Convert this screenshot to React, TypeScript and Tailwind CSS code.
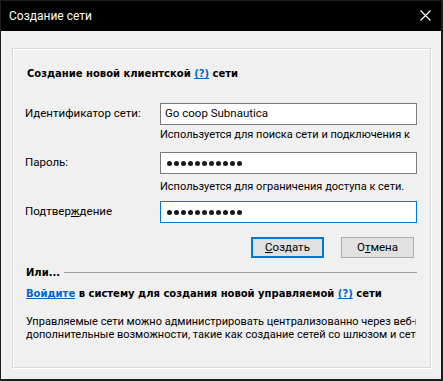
import React from "react";

const Dots = () => (
  <div className="flex items-center gap-[2px]">
    {Array.from({ length: 11 }).map((_, i) => (
      <div key={i} className="w-[5px] h-[5px] rounded-full bg-[#1a1a1a]" />
    ))}
  </div>
);

export default function App() {
  return (
    <div className="w-[443px] h-[381px] bg-[#1c1c1c] pl-[1px] pt-[1px] pr-[2px] pb-[2px] font-['Roboto',sans-serif] text-[11px] text-black">
      <div className="h-[30px] bg-black flex items-center justify-between pl-[8px] pr-[10px] text-white text-[12px]">
        <span className="leading-[16px]">Создание сети</span>
        <svg width="11" height="11" viewBox="0 0 11 11" className="mt-[-1px]">
          <path d="M0.5 0.5 L10.5 10.5 M10.5 0.5 L0.5 10.5" stroke="#ffffff" strokeWidth="1.1" />
        </svg>
      </div>
      <div className="h-[348px] bg-[#f0f0f0] pt-[17px] pl-[11px]">
        <div className="w-[419px] h-[320px] border border-[#d9d9d9] shadow-[inset_1px_1px_0_#ffffff,1px_1px_0_#ffffff] pl-[12px] overflow-hidden">
          <div className="w-[392px]">
            <div className="mt-[18px] h-[14px] leading-[14px] font-['DejaVu_Sans',sans-serif] font-bold text-[10px] pl-[2px] whitespace-nowrap">
              Создание новой клиентской{" "}
              <span className="text-[#0066cc] underline">(?)</span> сети
            </div>

            <div className="mt-[22px] h-[22px] flex items-center">
              <div className="w-[135px] text-[11.5px]">Идентификатор сети:</div>
              <div className="w-[257px] h-[22px] bg-white border border-[#7a7a7a] flex items-center pl-[4px] text-[11.5px]">
                Go coop Subnautica
              </div>
            </div>
            <div className="mt-[2px] h-[18px] overflow-hidden pl-[135px] leading-[15px]">
              Используется для поиска сети и подключения к ней.
            </div>

            <div className="mt-[7px] h-[22px] flex items-center">
              <div className="w-[135px] text-[11.5px]">Пароль:</div>
              <div className="w-[257px] h-[22px] bg-white border border-[#7a7a7a] flex items-center pl-[6px]">
                <Dots />
              </div>
            </div>
            <div className="mt-[5px] h-[15px] pl-[135px] leading-[15px] whitespace-nowrap">
              Используется для ограничения доступа к сети.
            </div>

            <div className="mt-[7px] h-[22px] flex items-center">
              <div className="w-[135px] text-[11.5px]">
                Подтвер<span className="underline">ж</span>дение
              </div>
              <div className="w-[257px] h-[22px] bg-white border border-[#0078d7] flex items-center pl-[6px]">
                <Dots />
              </div>
            </div>

            <div className="mt-[14px] h-[21px] flex justify-end gap-[17px] pr-[3px] text-[11.5px]">
              <div className="w-[73px] h-[21px] bg-[#e1e1e1] border border-[#0078d7] shadow-[inset_0_0_0_1px_#0078d7] flex items-center justify-center">
                <span>
                  <span className="underline">С</span>оздать
                </span>
              </div>
              <div className="w-[73px] h-[21px] bg-[#e1e1e1] border border-[#adadad] flex items-center justify-center">
                <span>
                  О<span className="underline">т</span>мена
                </span>
              </div>
            </div>

            <div className="mt-[8px] h-[14px] flex items-center gap-[4px]">
              <span className="font-['DejaVu_Sans',sans-serif] font-bold text-[10px] leading-[14px] pl-[1px]">Или...</span>
              <div className="flex-1 h-px bg-[#a0a0a0] mt-[-1px]" />
            </div>

            <div className="mt-[7px] h-[14px] leading-[14px] font-['DejaVu_Sans',sans-serif] font-bold text-[10px] pl-[1px] whitespace-nowrap">
              <span className="text-[#0066cc] underline">Войдите</span> в систему для создания новой управляемой{" "}
              <span className="text-[#0066cc] underline">(?)</span> сети
            </div>

            <div className="mt-[14px] leading-[13px] pl-[1px] overflow-hidden whitespace-nowrap w-[391px]">
              <div>Управляемые сети можно администрировать централизованно через веб-интерфейс и имеют</div>
              <div>дополнительные возможности, такие как создание сетей со шлюзом и сетей типа «звезда».</div>
            </div>
          </div>
        </div>
      </div>
    </div>
  );
}
